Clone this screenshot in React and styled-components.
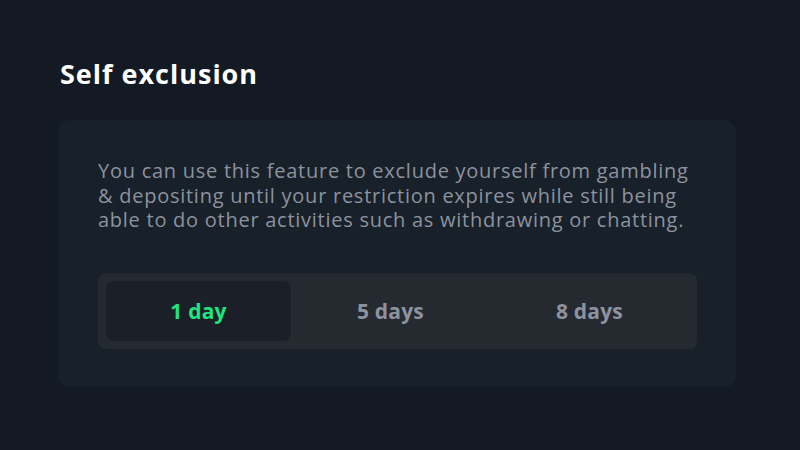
import React, { useState } from "react";
import styled, { createGlobalStyle } from "styled-components";

const Global = createGlobalStyle`
  html, body { margin: 0; padding: 0; background: #131a23; }
  body { font-family: "Open Sans", "Noto Sans", sans-serif; }
`;

const Page = styled.div`
  width: 800px;
  height: 450px;
  box-sizing: border-box;
  padding: 56px 64px 0 58px;
  background: #131a23;
`;

const Title = styled.h1`
  margin: 0 0 28px 2px;
  font-family: "Open Sans", sans-serif;
  font-weight: 700;
  font-size: 27px;
  line-height: 36px;
  color: #ffffff;
  letter-spacing: 1px;
`;

const Card = styled.section`
  box-sizing: border-box;
  width: 678px;
  height: 267px;
  background: #18202a;
  border-radius: 12px;
  padding: 39px 39px 0 40px;
`;

const Text = styled.p`
  margin: 0 0 40px 0;
  font-family: "Open Sans", sans-serif;
  font-size: 20px;
  line-height: 24.5px;
  letter-spacing: 0.74px;
  color: #8c939e;
  white-space: nowrap;
`;

const Tabs = styled.div`
  display: grid;
  grid-template-columns: 185px 1fr 1fr;
  padding: 8px;
  background: #242a30;
  border-radius: 8px;
  width: 599px;
  box-sizing: border-box;
`;

const Tab = styled.button`
  height: 60px;
  border: none;
  border-radius: 8px;
  background: ${(p) => (p.$active ? "#1b2028" : "transparent")};
  color: ${(p) => (p.$active ? "#20e47f" : "#8c939e")};
  font-family: "Open Sans", sans-serif;
  font-weight: 700;
  font-size: 21px;
  letter-spacing: 0.2px;
  cursor: pointer;
  padding: 0;
`;

export default function App() {
  const [active, setActive] = useState(0);
  const opts = ["1 day", "5 days", "8 days"];
  return (
    <>
      <Global />
      <Page>
        <Title>Self exclusion</Title>
        <Card>
          <Text>
            You can use this feature to exclude yourself from gambling
            <br />
            &amp; depositing until your restriction expires while still being
            <br />
            able to do other activities such as withdrawing or chatting.
          </Text>
          <Tabs>
            {opts.map((o, i) => (
              <Tab key={o} $active={i === active} onClick={() => setActive(i)}>
                {o}
              </Tab>
            ))}
          </Tabs>
        </Card>
      </Page>
    </>
  );
}
